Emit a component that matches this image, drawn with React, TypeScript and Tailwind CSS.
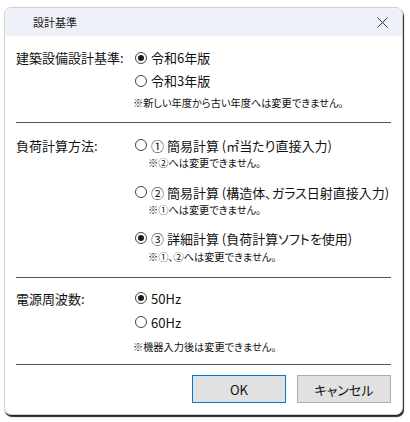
import React from "react";

const font = {
  fontFamily: '"Noto Sans CJK JP", "Noto Sans", sans-serif',
  fontFeatureSettings: '"palt"',
};

function Radio({ checked }: { checked?: boolean }) {
  return (
    <span className="ml-[2px] flex h-[12px] w-[12px] shrink-0 items-center justify-center rounded-full border border-[#444444] bg-white">
      {checked && <span className="h-[6px] w-[6px] rounded-full bg-[#1a1a1a]" />}
    </span>
  );
}

function Option({ checked, children, h = "h-[22px]", extra = "" }: { checked?: boolean; children: React.ReactNode; h?: string; extra?: string }) {
  return (
    <div className={`flex items-center gap-[4px] text-[13px] leading-none text-[#111111] ${h} ${extra}`}>
      <Radio checked={checked} />
      <span>{children}</span>
    </div>
  );
}

function Note({ children, extra = "" }: { children: React.ReactNode; extra?: string }) {
  return (
    <div className={`flex items-center text-[10.2px] leading-none text-[#111111] ${extra}`}>{children}</div>
  );
}

function Sep({ extra = "" }: { extra?: string }) {
  return <div className={`h-[1px] bg-[#555555] ${extra}`} />;
}

export default function App() {
  return (
    <div className="h-[422px] w-[410px] bg-white pl-[4px] pt-[7px]" style={font}>
      <div className="flex h-[408px] w-[399px] flex-col overflow-hidden rounded-[7px] border border-[#cfcfcf] bg-white shadow-[1px_2px_1px_rgba(0,0,0,0.85)]">
        {/* title bar */}
        <div className="flex h-[28px] shrink-0 items-center justify-between bg-[#eef1f8] pl-[28px] pr-[14px]">
          <span className="text-[11px] leading-none text-[#1a1a1a]">設計基準</span>
          <svg width="11" height="11" viewBox="0 0 11 11">
            <path d="M0.5 0.5 L10.5 10.5 M10.5 0.5 L0.5 10.5" stroke="#333" strokeWidth="1" fill="none" />
          </svg>
        </div>

        <div className="flex flex-col px-[11px]">
          {/* section 1 */}
          <div className="mt-[10px] flex">
            <div className="flex h-[23px] w-[117px] shrink-0 items-center text-[13px] leading-none text-[#111111]">建築設備設計基準:</div>
            <div className="flex flex-col">
              <Option checked h="h-[23px]">令和6年版</Option>
              <Option h="h-[23px]">令和3年版</Option>
              <Note extra="h-[22px]">※新しい年度から古い年度へは変更できません。</Note>
            </div>
          </div>
          <Sep extra="mt-[8px]" />

          {/* section 2 */}
          <div className="mt-[11px] flex">
            <div className="flex h-[22px] w-[117px] shrink-0 items-center text-[13px] leading-none text-[#111111]">負荷計算方法:</div>
            <div className="flex flex-col">
              <Option>① 簡易計算 (㎡当たり直接入力)</Option>
              <Note extra="h-[14px] pl-[15px]">※②へは変更できません。</Note>
              <Option extra="mt-[11px]">② 簡易計算 (構造体、ガラス日射直接入力)</Option>
              <Note extra="h-[14px] pl-[15px]">※①へは変更できません。</Note>
              <Option checked extra="mt-[10px]">③ 詳細計算 (負荷計算ソフトを使用)</Option>
              <Note extra="mt-[1px] h-[14px] pl-[15px]">※①、②へは変更できません。</Note>
            </div>
          </div>
          <Sep extra="mt-[13px]" />

          {/* section 3 */}
          <div className="mt-[9px] flex">
            <div className="flex h-[22px] w-[117px] shrink-0 items-center text-[13px] leading-none text-[#111111]">電源周波数:</div>
            <div className="flex flex-col">
              <Option checked>50Hz</Option>
              <Option extra="mt-[2px]">60Hz</Option>
              <Note extra="mt-[7px] h-[14px]">※機器入力後は変更できません。</Note>
            </div>
          </div>
          <Sep extra="mt-[10px]" />

          {/* buttons */}
          <div className="mt-[10px] flex justify-end gap-[11px]">
            <button className="flex h-[28px] w-[94px] items-center justify-center border border-[#0078d4] bg-[#e1e1e1] text-[13px] leading-none text-[#111111]">OK</button>
            <button className="flex h-[28px] w-[94px] items-center justify-center border border-[#adadad] bg-[#e1e1e1] text-[13px] leading-none text-[#111111]">キャンセル</button>
          </div>
        </div>
      </div>
    </div>
  );
}
